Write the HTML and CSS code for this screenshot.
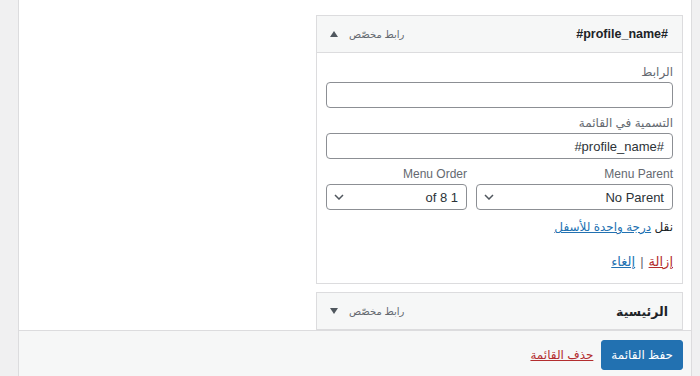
FILE: index.html
```html
<!DOCTYPE html>
<html lang="ar" dir="rtl">
<head>
<meta charset="utf-8">
<title>القائمة</title>
<link rel="stylesheet" href="styles.css">
</head>
<body>
<div class="panel">
  <div class="panel-body">
    <div class="items">
      <div class="item">
        <div class="item-bar">
          <span class="item-title">#profile_name#</span>
          <span class="item-controls">
            <span class="item-type">رابط مخصّص</span>
            <span class="arrow arrow-up"></span>
          </span>
        </div>
        <div class="item-settings">
          <div class="field">
            <div class="lbl">الرابط</div>
            <div class="input"></div>
          </div>
          <div class="field">
            <div class="lbl">التسمية في القائمة</div>
            <div class="input"><span class="ltr">#profile_name#</span></div>
          </div>
          <div class="selects">
            <div class="field">
              <div class="lbl">Menu Parent</div>
              <div class="select">
                <span>No Parent</span>
                <svg class="chev" width="10" height="6" viewBox="0 0 10 6"><path d="M1 1l4 4 4-4" fill="none" stroke="#50575e" stroke-width="1.5"/></svg>
              </div>
            </div>
            <div class="field">
              <div class="lbl">Menu Order</div>
              <div class="select">
                <span>of 8 1</span>
                <svg class="chev" width="10" height="6" viewBox="0 0 10 6"><path d="M1 1l4 4 4-4" fill="none" stroke="#50575e" stroke-width="1.5"/></svg>
              </div>
            </div>
          </div>
          <div class="move">نقل <a href="#" class="link">درجة واحدة للأسفل</a></div>
          <div class="actions"><a href="#" class="link-del">إزالة</a><span class="sep">|</span><a href="#" class="link">إلغاء</a></div>
        </div>
      </div>
      <div class="item">
        <div class="item-bar">
          <span class="item-title">الرئيسية</span>
          <span class="item-controls">
            <span class="item-type">رابط مخصّص</span>
            <span class="arrow arrow-down"></span>
          </span>
        </div>
      </div>
    </div>
  </div>
  <div class="footer">
    <button class="save" type="button">حفظ القائمة</button>
    <a href="#" class="link-del">حذف القائمة</a>
  </div>
</div>
</body>
</html>
```
FILE: styles.css
```css
* { box-sizing: border-box; }
html, body { margin: 0; padding: 0; }
body {
  background: #f0f0f1;
  font-family: "Liberation Sans", "DejaVu Sans", sans-serif;
  font-size: 13px;
  color: #1d2327;
  height: 376px;
  overflow: hidden;
}
.panel {
  margin: 0 8px 0 18px;
  border-left: 1px solid #dcdcde;
  border-right: 1px solid #dcdcde;
  height: 376px;
  background: #fff;
  display: flex;
  flex-direction: column;
}
.panel-body {
  flex: 1;
  overflow: hidden;
  padding: 15px 8px 0 0;
  display: flex;
}
.items {
  width: 367px;
  display: flex;
  flex-direction: column;
  gap: 8px;
}
.item-bar {
  height: 38px;
  border: 1px solid #dcdcde;
  background: #f6f7f7;
  display: flex;
  align-items: center;
  justify-content: space-between;
  padding: 0 14px 0 13px;
}
.item-title {
  font-weight: bold;
  font-size: 12.5px;
  color: #1d2327;
}
.item-controls {
  display: flex;
  align-items: center;
  gap: 11px;
}
.item-type {
  font-size: 10px;
  color: #646970;
}
.arrow {
  width: 0;
  height: 0;
  border-left: 4px solid transparent;
  border-right: 4px solid transparent;
}
.arrow-up { border-bottom: 6px solid #50575e; }
.arrow-down { border-top: 6px solid #50575e; }
.item-settings {
  border: 1px solid #dcdcde;
  border-top: 0;
  padding: 11px 9px 12px;
}
.field { margin-bottom: 7px; }
.lbl {
  font-size: 12px;
  line-height: 16px;
  color: #646970;
  margin-bottom: 2px;
}
.input, .select {
  height: 26px;
  border: 1px solid #8c8f94;
  border-radius: 4px;
  background: #fff;
  display: flex;
  align-items: center;
  padding: 0 8px;
  font-size: 13px;
  color: #2c3338;
}
.ltr { unicode-bidi: plaintext; }
.select { justify-content: space-between; padding: 0 8px 0 7px; }
.chev { display: block; }
.selects {
  display: grid;
  grid-template-columns: 1fr 141px;
  gap: 9px;
}
.selects .field { margin-bottom: 0; }
.move {
  margin-top: 8px;
  line-height: 18px;
  font-size: 12px;
  color: #1d2327;
}
.link { color: #2271b1; text-decoration: underline; }
.link-del { color: #b32d2e; text-decoration: underline; }
.actions {
  margin-top: 17px;
  line-height: 18px;
  font-size: 13px;
  display: flex;
  gap: 5px;
}
.sep { color: #646970; }
.footer {
  height: 46px;
  border-top: 1px solid #dcdcde;
  background: #f6f7f7;
  display: flex;
  align-items: center;
  padding: 2px 8px 0 0;
  gap: 8px;
}
.save {
  height: 30px;
  padding: 0 9px;
  background: #2271b1;
  border: 1px solid #2271b1;
  border-radius: 3px;
  color: #fff;
  font-family: inherit;
  font-size: 12px;
}
.footer .link-del { font-size: 12px; }
```
